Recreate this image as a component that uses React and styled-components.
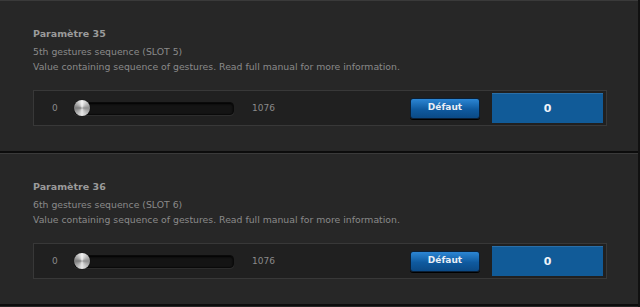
import React from 'react'
import styled, { createGlobalStyle } from 'styled-components'

const GlobalStyle = createGlobalStyle`
  html, body {
    margin: 0;
    padding: 0;
    background: #262626;
  }
  body {
    font-family: "DejaVu Sans", "Liberation Sans", sans-serif;
  }
`

const params = [
  { id: 35, slot: 5, ordinal: '5th', value: 0 },
  { id: 36, slot: 6, ordinal: '6th', value: 0 },
]

const Page = styled.div`
  width: 640px;
  height: 307px;
  overflow: hidden;
  border-right: 2px solid #111;
  box-sizing: border-box;
`

const Panel = styled.section`
  height: 153px;
  box-sizing: border-box;
  padding: 26px 0 0 33px;
  background: #272727;
  border-top: 1px solid #3a3a3a;
  border-bottom: 2px solid #0c0c0c;
`

const Title = styled.h2`
  margin: 0;
  font-size: 9.5px;
  font-weight: bold;
  color: #9b9b9b;
  line-height: 14px;
`

const Line = styled.p`
  margin: ${p => p.$gap}px 0 0;
  font-size: 9.3px;
  color: #8a8a8a;
  line-height: 13px;
`

const Control = styled.div`
  margin-top: 17px;
  width: 574px;
  height: 36px;
  box-sizing: border-box;
  display: flex;
  align-items: center;
  background: #202020;
  border: 1px solid #383838;
  padding: 0 3px 0 18px;
`

const Bound = styled.span`
  font-size: 9px;
  color: #8a8a8a;
  width: ${p => p.$w}px;
`

const Track = styled.div`
  position: relative;
  width: 158px;
  height: 11px;
  margin-right: 18px;
  background: #141414;
  border: 1px solid #0a0a0a;
  border-radius: 4px;
  box-shadow: inset 0 1px 2px #000, 0 1px 0 #2d2d2d;
`

const Thumb = styled.div`
  position: absolute;
  left: -1px;
  top: 50%;
  width: 16px;
  height: 16px;
  margin-top: -8px;
  border-radius: 50%;
  background: conic-gradient(from 0deg, #f4f4f4, #8d8d8d 25%, #e8e8e8 50%, #7a7a7a 75%, #f4f4f4);
  box-shadow: 0 0 1px #000;
`

const Spacer = styled.div`
  flex: 1;
`

const DefaultButton = styled.button`
  width: 70px;
  height: 21px;
  margin-right: 12px;
  border: 1px solid #0a1f36;
  border-radius: 3px;
  background: linear-gradient(#2c86d4, #0f5a9f 55%, #0b4a86);
  color: #e8eef5;
  font-family: "DejaVu Sans", "Liberation Sans", sans-serif;
  font-size: 9px;
  font-weight: bold;
  padding: 0 0 3px;
  box-shadow: 0 1px 0 #000;
`

const ValueBox = styled.div`
  width: 111px;
  height: 29px;
  display: flex;
  align-items: center;
  justify-content: center;
  background: #115b98;
  border-top: 1px solid #2a6fa8;
  color: #eef3f8;
  font-size: 11px;
  font-weight: bold;
`

function ParamPanel({ p }) {
  return (
    <Panel>
      <Title>Paramètre {p.id}</Title>
      <Line $gap={4}>{p.ordinal} gestures sequence (SLOT {p.slot})</Line>
      <Line $gap={2}>Value containing sequence of gestures. Read full manual for more information.</Line>
      <Control>
        <Bound $w={22}>0</Bound>
        <Track>
          <Thumb />
        </Track>
        <Bound $w={40}>1076</Bound>
        <Spacer />
        <DefaultButton>Défaut</DefaultButton>
        <ValueBox>{p.value}</ValueBox>
      </Control>
    </Panel>
  )
}

export default function App() {
  return (
    <Page>
      <GlobalStyle />
      {params.map(p => (
        <ParamPanel key={p.id} p={p} />
      ))}
    </Page>
  )
}
